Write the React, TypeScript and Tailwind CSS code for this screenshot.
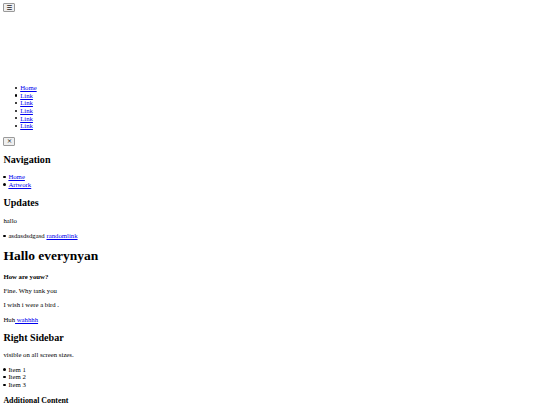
const linkCls = "text-[#0000ee] underline";

function Bullets({ items, pad }: { items: React.ReactNode[]; pad: string }) {
  return (
    <ul className={pad}>
      {items.map((item, i) => (
        <li key={i} className="flex items-center">
          <span className="mr-[2.8px] h-[2.2px] w-[2.2px] shrink-0 rounded-full bg-black" />
          <span>{item}</span>
        </li>
      ))}
    </ul>
  );
}

export default function App() {
  return (
    <div className="min-h-[405px] bg-white px-[3.4px] pt-[3.4px] font-['Liberation_Serif',serif] text-[6.75px] leading-[7.6px] text-black">
      <button className="flex h-[9px] w-[12px] items-center justify-center rounded-[1px] border border-[#9a9a9a] bg-[#efefef] font-['DejaVu_Sans',sans-serif] text-[6.5px] leading-none text-[#222]">
        ☰
      </button>

      <div className="mt-[71.8px]">
        <Bullets
          pad="pl-[11.8px]"
          items={["Home", "Link", "Link", "Link", "Link", "Link"].map((t) => (
            <a className={linkCls} href="#">
              {t}
            </a>
          ))}
        />
      </div>

      <button className="mt-[7.2px] flex h-[9px] w-[12px] items-center justify-center rounded-[1px] border border-[#9a9a9a] bg-[#efefef] font-['DejaVu_Sans',sans-serif] text-[6.5px] leading-none text-[#222]">
        ×
      </button>

      <h2 className="mt-[8.2px] text-[10.1px] font-bold leading-[11.6px]">Navigation</h2>
      <div className="mt-[7.4px]">
        <Bullets
          pad="pl-0"
          items={[
            <a className={linkCls} href="#">Home</a>,
            <a className={linkCls} href="#">Artwork</a>,
          ]}
        />
      </div>

      <h2 className="mt-[8.8px] text-[10.1px] font-bold leading-[11.6px]">Updates</h2>
      <p className="mt-[8.4px]">hallo</p>
      <div className="mt-[7.4px]">
        <Bullets
          pad="pl-0"
          items={[
            <>
              asdasdsdgasd <a className={linkCls} href="#">randomlink</a>
            </>,
          ]}
        />
      </div>

      <h1 className="mt-[8.45px] text-[13.5px] font-bold leading-[15.5px]">Hallo everynyan</h1>
      <h4 className="mt-[9.45px] font-bold">How are youw?</h4>
      <p className="mt-[6.4px]">Fine. Why tank you</p>
      <p className="mt-[6.4px]">I wish i were a bird .</p>
      <p className="mt-[7px]">
        Huh<a className={linkCls} href="#"> wahhhh</a>
      </p>

      <h2 className="mt-[8.6px] text-[10.1px] font-bold leading-[11.6px]">Right Sidebar</h2>
      <p className="mt-[7.4px]">visible on all screen sizes.</p>
      <div className="mt-[7.4px]">
        <Bullets pad="pl-0" items={["Item 1", "Item 2", "Item 3"]} />
      </div>

      <h3 className="mt-[7.5px] text-[7.9px] font-bold leading-[9px]">Additional Content</h3>
    </div>
  );
}
